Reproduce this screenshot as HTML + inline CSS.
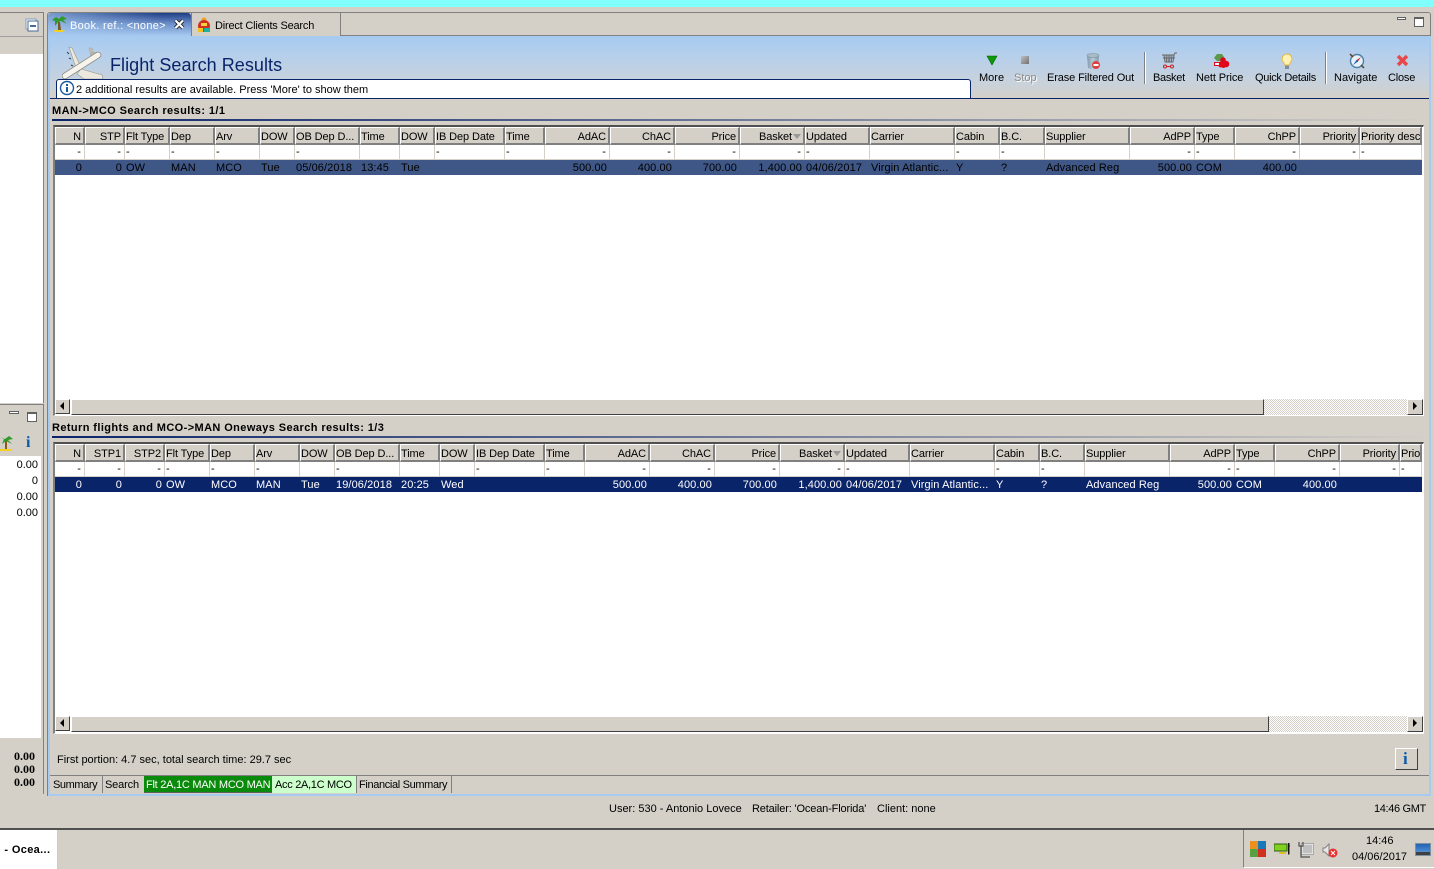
<!DOCTYPE html>
<html><head><meta charset="utf-8"><title>Flight Search Results</title>
<style>
html,body{margin:0;padding:0;width:1434px;height:869px;overflow:hidden;background:#d4d0c8}
body{position:relative;font:11px/13px "Liberation Sans",sans-serif;color:#000}
.a{position:absolute}
.t{position:absolute;white-space:nowrap;margin-top:1px}
.r{position:absolute;white-space:nowrap;text-align:right;margin-top:1px}
.b{font-weight:bold}
table{position:absolute;left:55px;width:1367px;table-layout:fixed;border-collapse:separate;border-spacing:0;font:11px/13px "Liberation Sans",sans-serif}
th{height:12px;line-height:12px;font-weight:normal;padding:3px 2px 0 0;text-align:left;background:#d4d0c8;border-top:1px solid #fff;border-left:1px solid #fff;border-right:2px solid #808080;border-bottom:2px solid #808080;overflow:hidden;white-space:nowrap;box-sizing:content-box;letter-spacing:-.1px}
td{padding:0 3px 0 1px;height:14px;overflow:hidden;white-space:nowrap;box-sizing:content-box;letter-spacing:.1px}
.f td{background:#fff;border-right:1px solid #d4d0c8;border-bottom:1px solid #d4d0c8;height:14px;line-height:13px}
.d td{height:15px;line-height:14px}
.d1 td{background:#3f5787;color:#000}
.d2 td{background:#0a246a;color:#fff}
.n{text-align:right}
.sb{position:absolute;height:15px;background:#d4d0c8;border-top:1px solid #fff;border-left:1px solid #fff;border-right:1px solid #404040;border-bottom:1px solid #404040;box-sizing:border-box}
.pat{position:absolute;height:15px;background:repeating-conic-gradient(#d4d0c8 0 25%,#fff 0 50%) 0 0/2px 2px}
.sep{position:absolute;width:1px;background:#808080;border-right:1px solid #fff}
</style></head><body>
<div class="a" style="left:0;top:0;width:1434px;height:7px;background:#80ffff"></div>

<!-- left panel -->
<div class="a" style="left:0;top:12px;width:44px;height:391px;background:#d4d0c8;border-right:1px solid #808080;border-top:1px solid #808080;box-sizing:border-box"></div>
<div class="a" style="left:0;top:36px;width:43px;height:1px;background:#a0a0a0"></div>
<div class="a" style="left:0;top:37px;width:43px;height:17px;background:#d4d0c8"></div>
<div class="a" style="left:0;top:54px;width:43px;height:349px;background:#fff"></div>
<svg class="a" style="left:25px;top:18px" width="14" height="14"><rect x="1" y="1" width="10" height="10" fill="#fff" stroke="#7f9db9"/><rect x="3" y="3" width="10" height="10" fill="#fff" stroke="#4a6a94"/><rect x="5" y="7" width="6" height="2" fill="#4a6a94"/></svg>

<div class="a" style="left:0;top:404px;width:44px;height:390px;border-top:1px solid #808080;border-right:1px solid #808080;box-sizing:border-box"></div>
<div class="a" style="left:9px;top:411px;width:8px;height:1px;border:1px solid #606060;background:#fff"></div>
<div class="a" style="left:27px;top:412px;width:8px;height:7px;border:1px solid #606060;border-top-width:2px;background:#fff"></div>
<div class="a" style="left:0;top:432px;width:41px;height:24px;background:#d4d0c8"></div>
<div class="a" style="left:0;top:456px;width:41px;height:282px;background:#fff"></div>
<svg class="a" style="left:0;top:434px" width="14" height="18"><path d="M0 15h12l-1 2H0z" fill="#f4d020"/><path d="M5 6h2v9H5z" fill="#8a5a20"/><path d="M0 3l5 2 4-3 4 3-5 1 4 4-6-3-4 3 2-5z" fill="#2e9a2a"/></svg>
<div class="t b" style="left:26px;top:433px;font:bold 16px/18px 'Liberation Serif',serif;color:#0a5aa8">i</div>
<div class="r" style="right:1396px;top:458px">0.00</div>
<div class="r" style="right:1396px;top:474px">0</div>
<div class="r" style="right:1396px;top:490px">0.00</div>
<div class="r" style="right:1396px;top:506px">0.00</div>
<div class="r b" style="right:1399px;top:749px;font-family:'Liberation Serif',serif;font-size:12px">0.00</div>
<div class="r b" style="right:1399px;top:762px;font-family:'Liberation Serif',serif;font-size:12px">0.00</div>
<div class="r b" style="right:1399px;top:775px;font-family:'Liberation Serif',serif;font-size:12px">0.00</div>

<!-- main panel -->
<div class="a" style="left:47px;top:12px;width:1384px;height:784px;border:1px solid #808080;border-bottom:0;border-radius:3px 3px 0 0;box-sizing:border-box"></div>
<div class="a" style="left:48px;top:36px;width:2px;height:759px;background:#a6caf0"></div>
<div class="a" style="left:1429px;top:36px;width:2px;height:759px;background:#a6caf0"></div>
<div class="a" style="left:48px;top:794px;width:1383px;height:2px;background:#a6caf0"></div>
<div class="a" style="left:48px;top:35px;width:1383px;height:1px;background:#808080"></div>

<!-- tabs -->
<div class="a" style="left:48px;top:13px;width:143px;height:23px;background:linear-gradient(90deg,rgba(166,202,240,.65),rgba(166,202,240,0) 80%),linear-gradient(180deg,#1e3c84 0%,#6a8cc8 45%,#a6caf0 100%);border-radius:3px 3px 0 0"></div>
<div class="a" style="left:191px;top:13px;width:150px;height:23px;border-right:1px solid #808080;border-left:1px solid #808080;box-sizing:border-box;background:#d4d0c8"></div>
<svg class="a" style="left:51px;top:15px" width="18" height="18"><path d="M2 15h12l-2 2H4z" fill="#f4d020"/><path d="M7 7h2l1 8H7z" fill="#7a5a20"/><path d="M1 5l4-3 3 2 3-3 5 3-4 1 4 4-6-3-3 1-3 4 0-5z" fill="#2e9a2a"/></svg>
<div class="t" style="left:70px;top:19px;color:#fff;letter-spacing:.3px">Book. ref.: &lt;none&gt;</div>
<svg class="a" style="left:173px;top:18px" width="13" height="13"><path d="M2.500 2.500l7.500 7.500M10 2.500l-7.500 7.500" stroke="#202020" stroke-width="4"/><path d="M2.500 2.500l7.500 7.500M10 2.500l-7.500 7.500" stroke="#fff" stroke-width="2.200"/></svg>
<svg class="a" style="left:196px;top:16px" width="16" height="17"><circle cx="8" cy="4" r="2.500" fill="#f0a020"/><circle cx="8" cy="10" r="6" fill="#d03020"/><rect x="2" y="12" width="5" height="4" fill="#f4c020"/><rect x="8" y="12" width="6" height="4" fill="#20b0a0"/><rect x="5" y="7" width="6" height="3" fill="#f4d040"/></svg>
<div class="t" style="left:215px;top:19px;letter-spacing:-.2px">Direct Clients Search</div>
<div class="a" style="left:1397px;top:17px;width:7px;height:1px;border:1px solid #606060;background:#fff"></div>
<div class="a" style="left:1414px;top:17px;width:8px;height:7px;border:1px solid #606060;border-top-width:2px;background:#fff"></div>

<!-- banner -->
<div class="a" style="left:50px;top:36px;width:1379px;height:62px;background:linear-gradient(180deg,#a6caf0 0%,#b5cfec 30%,#c8d2dc 75%,#d4d0c8 100%)"></div>
<div class="a" style="left:50px;top:98px;width:1379px;height:1px;background:#0a246a"></div>
<svg class="a" style="left:62px;top:46px" width="42" height="33">
<path d="M7 1l3 1 8 17-4 3z" fill="#ecE8de" stroke="#9a968a" stroke-width=".6"/>
<path d="M19 23l21 6 1 4H22l-7-5z" fill="#ecE8de" stroke="#9a968a" stroke-width=".6"/>
<path d="M27 2l3 0 2 7-3 1zM29 7l8-1-1 3-6 2z" fill="#c4c0b6" stroke="#9a968a" stroke-width=".4"/>
<path d="M3 30L36 9" stroke="#8a867a" stroke-width="6.500" stroke-linecap="round"/>
<path d="M3 30L36 9" stroke="#f6f4ec" stroke-width="5" stroke-linecap="round"/>
<path d="M5 6l2 2M7 12l2 1M9 19l2 1" stroke="#404040"/>
</svg>
<div class="t" style="left:110px;top:54px;font-size:18px;line-height:21px;color:#0a246a;letter-spacing:.05px">Flight Search Results</div>
<div class="a" style="left:56px;top:79px;width:915px;height:19px;background:#fff;border:1px solid #0a246a;border-bottom:0;border-radius:3px 3px 0 0;box-sizing:border-box"></div>
<svg class="a" style="left:59px;top:80px" width="16" height="16"><circle cx="8" cy="8" r="6.500" fill="#fff" stroke="#1a5a9a" stroke-width="1.400"/><rect x="7" y="7" width="2" height="5" fill="#1a5a9a"/><rect x="7" y="4" width="2" height="2" fill="#1a5a9a"/></svg>
<div class="t" style="left:76px;top:83px">2 additional results are available. Press 'More' to show them</div>

<!-- toolbar -->
<svg class="a" style="left:986px;top:55px" width="12" height="11"><path d="M1 1h10L6 10z" fill="#0a9a0a" stroke="#056005" stroke-width=".6"/></svg>
<div class="a" style="left:1021px;top:56px;width:8px;height:8px;background:linear-gradient(135deg,#c0c0c0,#707070)"></div>
<svg class="a" style="left:1086px;top:53px" width="16" height="17"><defs><linearGradient id="bar" x1="0" x2="1"><stop offset="0" stop-color="#7f98aa"/><stop offset=".5" stop-color="#b4cad8"/><stop offset="1" stop-color="#7f98aa"/></linearGradient></defs><path d="M1 2l1 13q5 2 10 0l1-13z" fill="url(#bar)"/><ellipse cx="7" cy="2.500" rx="6" ry="2" fill="#a8bcc8" stroke="#80949f" stroke-width=".6"/><circle cx="10" cy="12" r="4" fill="#e04040"/><rect x="7.500" y="11" width="5" height="2" fill="#fff"/></svg>
<div class="sep" style="left:1144px;top:52px;height:32px"></div>
<svg class="a" style="left:1161px;top:52px" width="17" height="17"><path d="M1 3h12l1-2h2M3 3l1 7h8l1-7M5 3l.7 7M7 3l.3 7M9 3l-.3 7M11 3l-.7 7M2 6h12" fill="none" stroke="#666" stroke-width="1"/><circle cx="4" cy="14.500" r="1.500" fill="none" stroke="#d02020"/><circle cx="11" cy="14.500" r="1.500" fill="none" stroke="#d02020"/><path d="M5.500 14.500h4" stroke="#d02020"/></svg>
<svg class="a" style="left:1213px;top:53px" width="17" height="16"><path d="M1 5l3-4 5 0 2 3-3 4-4 0z" fill="#5a9a4a"/><circle cx="10" cy="7" r="2.800" fill="#e00818"/><circle cx="13" cy="11" r="3.300" fill="#e00818"/><circle cx="8" cy="11.500" r="3" fill="#e00818"/><circle cx="10.500" cy="12.500" r="2.500" fill="#e00818"/><rect x="1.500" y="9.500" width="5" height="3" fill="#fff" stroke="#e00818"/></svg>
<svg class="a" style="left:1281px;top:53px" width="12" height="17"><path d="M6 1a5 5 0 0 0-3.500 8.500L4 12h4l1.500-2.500A5 5 0 0 0 6 1z" fill="#fff2b4" stroke="#e8b840"/><rect x="4" y="12.500" width="4" height="3.500" fill="#8090a0"/></svg>
<div class="sep" style="left:1325px;top:52px;height:32px"></div>
<svg class="a" style="left:1348px;top:52px" width="18" height="18"><circle cx="9" cy="9" r="6.500" fill="#e8f0f8" stroke="#4a80a8" stroke-width="1.400"/><path d="M13 5L9.500 10 8 8.500z" fill="#d02020"/><path d="M5 13L8.500 8 10 9.500z" fill="#2060b0"/><path d="M2 2l3 3M13 13l3 3" stroke="#604020" stroke-width="1.500"/></svg>
<svg class="a" style="left:1396px;top:54px" width="13" height="13"><path d="M2 2l9 9M11 2l-9 9" stroke="#e84848" stroke-width="3.500"/></svg>
<div class="t" style="left:979px;top:71px">More</div>
<div class="t" style="left:1014px;top:71px;color:#8a8a8a;text-shadow:1px 1px 0 #fff">Stop</div>
<div class="t" style="left:1047px;top:71px;letter-spacing:-.12px">Erase Filtered Out</div>
<div class="t" style="left:1153px;top:71px;letter-spacing:-.3px">Basket</div>
<div class="t" style="left:1196px;top:71px;letter-spacing:-.1px">Nett Price</div>
<div class="t" style="left:1255px;top:71px;letter-spacing:-.3px">Quick Details</div>
<div class="t" style="left:1334px;top:71px">Navigate</div>
<div class="t" style="left:1388px;top:71px;letter-spacing:-.2px">Close</div>

<!-- section 1 -->
<div class="t b" style="left:52px;top:104px;letter-spacing:.42px">MAN-&gt;MCO Search results: 1/1</div>
<div class="a" style="left:52px;top:119px;width:1377px;height:2px;background:linear-gradient(90deg,#0a246a,#d4d0c8)"></div>
<div class="a" style="left:53px;top:125px;width:1371px;height:291px;background:#fff;border-top:2px solid #505050;border-left:2px solid #808080;border-right:1px solid #fff;border-bottom:1px solid #fff;box-sizing:border-box"></div>

<table style="top:127px">
<colgroup><col style="width:30px"><col style="width:40px"><col style="width:45px"><col style="width:45px"><col style="width:45px"><col style="width:35px"><col style="width:65px"><col style="width:40px"><col style="width:35px"><col style="width:70px"><col style="width:40px"><col style="width:65px"><col style="width:65px"><col style="width:65px"><col style="width:65px"><col style="width:65px"><col style="width:85px"><col style="width:45px"><col style="width:45px"><col style="width:85px"><col style="width:65px"><col style="width:40px"><col style="width:65px"><col style="width:60px"><col style="width:62px"></colgroup>
<tr><th class="n">N</th><th class="n">STP</th><th>Flt Type</th><th>Dep</th><th>Arv</th><th>DOW</th><th>OB Dep D...</th><th>Time</th><th>DOW</th><th>IB Dep Date</th><th>Time</th><th class="n">AdAC</th><th class="n">ChAC</th><th class="n">Price</th><th class="n">Basket<span style="display:inline-block;width:0;height:0;border:4px solid transparent;border-top:5px solid #999;border-bottom:0;margin:0 0 1px 1px"></span></th><th>Updated</th><th>Carrier</th><th>Cabin</th><th>B.C.</th><th>Supplier</th><th class="n">AdPP</th><th>Type</th><th class="n">ChPP</th><th class="n">Priority</th><th>Priority descr</th></tr>
<tr class="f"><td class="n">-</td><td class="n">-</td><td>-</td><td>-</td><td>-</td><td></td><td>-</td><td></td><td></td><td>-</td><td>-</td><td class="n">-</td><td class="n">-</td><td class="n">-</td><td class="n">-</td><td>-</td><td></td><td>-</td><td>-</td><td></td><td class="n">-</td><td>-</td><td class="n">-</td><td class="n">-</td><td>-</td></tr>
<tr class="d d1"><td class="n">0</td><td class="n">0</td><td>OW</td><td>MAN</td><td>MCO</td><td>Tue</td><td>05/06/2018</td><td>13:45</td><td>Tue</td><td></td><td></td><td class="n">500.00</td><td class="n">400.00</td><td class="n">700.00</td><td class="n">1,400.00</td><td>04/06/2017</td><td>Virgin Atlantic...</td><td>Y</td><td>?</td><td>Advanced Reg</td><td class="n">500.00</td><td>COM</td><td class="n">400.00</td><td></td><td></td></tr>
</table>

<div class="sb" style="left:55px;top:399px;width:15px"></div>
<svg class="a" style="left:59px;top:402px" width="6" height="9"><path d="M5 0v8L1 4z" fill="#000"/></svg>
<div class="sb" style="left:71px;top:399px;width:1193px;height:16px"></div>
<div class="pat" style="left:1264px;top:399px;width:143px;height:16px"></div>
<div class="sb" style="left:1407px;top:399px;width:16px;height:16px"></div>
<svg class="a" style="left:1412px;top:402px" width="6" height="9"><path d="M1 0v8l4-4z" fill="#000"/></svg>

<!-- section 2 -->
<div class="t b" style="left:52px;top:421px;letter-spacing:.4px">Return flights and MCO-&gt;MAN Oneways Search results: 1/3</div>
<div class="a" style="left:52px;top:436px;width:1377px;height:2px;background:linear-gradient(90deg,#0a246a,#d4d0c8)"></div>
<div class="a" style="left:53px;top:442px;width:1371px;height:292px;background:#fff;border-top:2px solid #505050;border-left:2px solid #808080;border-right:1px solid #fff;border-bottom:1px solid #fff;box-sizing:border-box"></div>

<table style="top:444px">
<colgroup><col style="width:30px"><col style="width:40px"><col style="width:40px"><col style="width:45px"><col style="width:45px"><col style="width:45px"><col style="width:35px"><col style="width:65px"><col style="width:40px"><col style="width:35px"><col style="width:70px"><col style="width:40px"><col style="width:65px"><col style="width:65px"><col style="width:65px"><col style="width:65px"><col style="width:65px"><col style="width:85px"><col style="width:45px"><col style="width:45px"><col style="width:85px"><col style="width:65px"><col style="width:40px"><col style="width:65px"><col style="width:60px"><col style="width:22px"></colgroup>
<tr><th class="n">N</th><th class="n">STP1</th><th class="n">STP2</th><th>Flt Type</th><th>Dep</th><th>Arv</th><th>DOW</th><th>OB Dep D...</th><th>Time</th><th>DOW</th><th>IB Dep Date</th><th>Time</th><th class="n">AdAC</th><th class="n">ChAC</th><th class="n">Price</th><th class="n">Basket<span style="display:inline-block;width:0;height:0;border:4px solid transparent;border-top:5px solid #999;border-bottom:0;margin:0 0 1px 1px"></span></th><th>Updated</th><th>Carrier</th><th>Cabin</th><th>B.C.</th><th>Supplier</th><th class="n">AdPP</th><th>Type</th><th class="n">ChPP</th><th class="n">Priority</th><th>Prior</th></tr>
<tr class="f"><td class="n">-</td><td class="n">-</td><td class="n">-</td><td>-</td><td>-</td><td>-</td><td></td><td>-</td><td></td><td></td><td>-</td><td>-</td><td class="n">-</td><td class="n">-</td><td class="n">-</td><td class="n">-</td><td>-</td><td></td><td>-</td><td>-</td><td></td><td class="n">-</td><td>-</td><td class="n">-</td><td class="n">-</td><td>-</td></tr>
<tr class="d d2"><td class="n">0</td><td class="n">0</td><td class="n">0</td><td>OW</td><td>MCO</td><td>MAN</td><td>Tue</td><td>19/06/2018</td><td>20:25</td><td>Wed</td><td></td><td></td><td class="n">500.00</td><td class="n">400.00</td><td class="n">700.00</td><td class="n">1,400.00</td><td>04/06/2017</td><td>Virgin Atlantic...</td><td>Y</td><td>?</td><td>Advanced Reg</td><td class="n">500.00</td><td>COM</td><td class="n">400.00</td><td></td><td></td></tr>
</table>

<div class="sb" style="left:55px;top:716px;width:15px"></div>
<svg class="a" style="left:59px;top:719px" width="6" height="9"><path d="M5 0v8L1 4z" fill="#000"/></svg>
<div class="sb" style="left:71px;top:716px;width:1198px;height:16px"></div>
<div class="pat" style="left:1269px;top:716px;width:138px;height:16px"></div>
<div class="sb" style="left:1407px;top:716px;width:16px;height:16px"></div>
<svg class="a" style="left:1412px;top:719px" width="6" height="9"><path d="M1 0v8l4-4z" fill="#000"/></svg>

<!-- footer -->
<div class="t" style="left:57px;top:753px">First portion: 4.7 sec, total search time: 29.7 sec</div>
<div class="a" style="left:1395px;top:748px;width:23px;height:22px;border-top:1px solid #fff;border-left:1px solid #fff;border-right:1px solid #404040;border-bottom:1px solid #404040;box-sizing:border-box"></div>
<div class="t b" style="left:1403px;top:749px;font:bold 17px/18px 'Liberation Serif',serif;color:#0a5aa8">i</div>
<div class="a" style="left:50px;top:775px;width:1379px;height:1px;background:#808080"></div>
<div class="t" style="left:53px;top:778px;letter-spacing:-.4px">Summary</div>
<div class="a" style="left:102px;top:776px;width:1px;height:17px;background:#808080"></div>
<div class="t" style="left:105px;top:778px;letter-spacing:-.15px">Search</div>
<div class="a" style="left:144px;top:776px;width:128px;height:17px;background:#0a8a0a;border-bottom:1px solid #606060;box-sizing:border-box"></div>
<div class="t" style="left:146px;top:778px;color:#fff;letter-spacing:-.25px">Flt 2A,1C MAN MCO MAN</div>
<div class="a" style="left:272px;top:776px;width:84px;height:17px;background:#ccffcc"></div>
<div class="t" style="left:275px;top:778px;letter-spacing:-.3px">Acc 2A,1C MCO</div>
<div class="a" style="left:356px;top:776px;width:1px;height:17px;background:#808080"></div>
<div class="t" style="left:359px;top:778px;letter-spacing:-.35px">Financial Summary</div>
<div class="a" style="left:451px;top:776px;width:1px;height:17px;background:#808080"></div>

<!-- status -->
<div class="t" style="left:609px;top:802px">User: 530 - Antonio Lovece</div>
<div class="t" style="left:752px;top:802px;letter-spacing:-.15px">Retailer: 'Ocean-Florida'</div>
<div class="t" style="left:877px;top:802px">Client: none</div>
<div class="t" style="left:1374px;top:802px;letter-spacing:-.35px">14:46 GMT</div>

<!-- taskbar -->
<div class="a" style="left:0;top:828px;width:1434px;height:2px;background:#505050"></div>
<div class="a" style="left:0;top:830px;width:58px;height:39px;background:#fff;border-right:1px solid #d0ccc4;box-sizing:border-box"></div>
<div class="t b" style="left:-3px;top:843px;letter-spacing:.35px">: - Ocea...</div>
<div class="a" style="left:1243px;top:830px;width:191px;height:38px;border-left:1px solid #808080;border-bottom:1px solid #fff;box-sizing:border-box"></div>
<svg class="a" style="left:1250px;top:841px" width="16" height="16"><rect x="0" y="0" width="8" height="8" fill="#e89020"/><rect x="8" y="0" width="8" height="8" fill="#1878b8"/><rect x="0" y="8" width="8" height="8" fill="#58a040"/><rect x="8" y="8" width="8" height="8" fill="#d03020"/></svg>
<svg class="a" style="left:1274px;top:843px" width="16" height="12"><rect x="0" y="1" width="13" height="7" fill="#80d020" stroke="#306010"/><path d="M5 9h7v2H5z" fill="#e0c020"/><path d="M14 0h1v11h-1M14 3h2" stroke="#202020"/></svg>
<svg class="a" style="left:1298px;top:841px" width="16" height="17"><rect x="4" y="3" width="11" height="10" fill="#c0c0c0" stroke="#fff"/><rect x="3.500" y="2.500" width="12" height="11" fill="none" stroke="#808080" stroke-width=".6"/><path d="M1 1v4h4V1M3 5v11h9" fill="none" stroke="#505050" stroke-width="1.200"/></svg>
<svg class="a" style="left:1322px;top:843px" width="16" height="15"><path d="M1 5h2l4-4v12l-4-4H1z" fill="#e8e8e8" stroke="#808080"/><circle cx="11" cy="10" r="4.500" fill="#e83030"/><path d="M9 8l4 4M13 8l-4 4" stroke="#fff"/></svg>
<div class="t" style="left:1366px;top:834px">14:46</div>
<div class="t" style="left:1352px;top:850px">04/06/2017</div>
<svg class="a" style="left:1415px;top:843px" width="16" height="13"><defs><linearGradient id="dk" x1="0" y1="0" x2="0" y2="1"><stop offset="0" stop-color="#2060b0"/><stop offset="1" stop-color="#60a0e0"/></linearGradient></defs><rect x=".5" y=".5" width="15" height="12" fill="url(#dk)" stroke="#8090a0"/><rect x="1" y="9" width="14" height="3" fill="#404040"/></svg>
</body></html>
